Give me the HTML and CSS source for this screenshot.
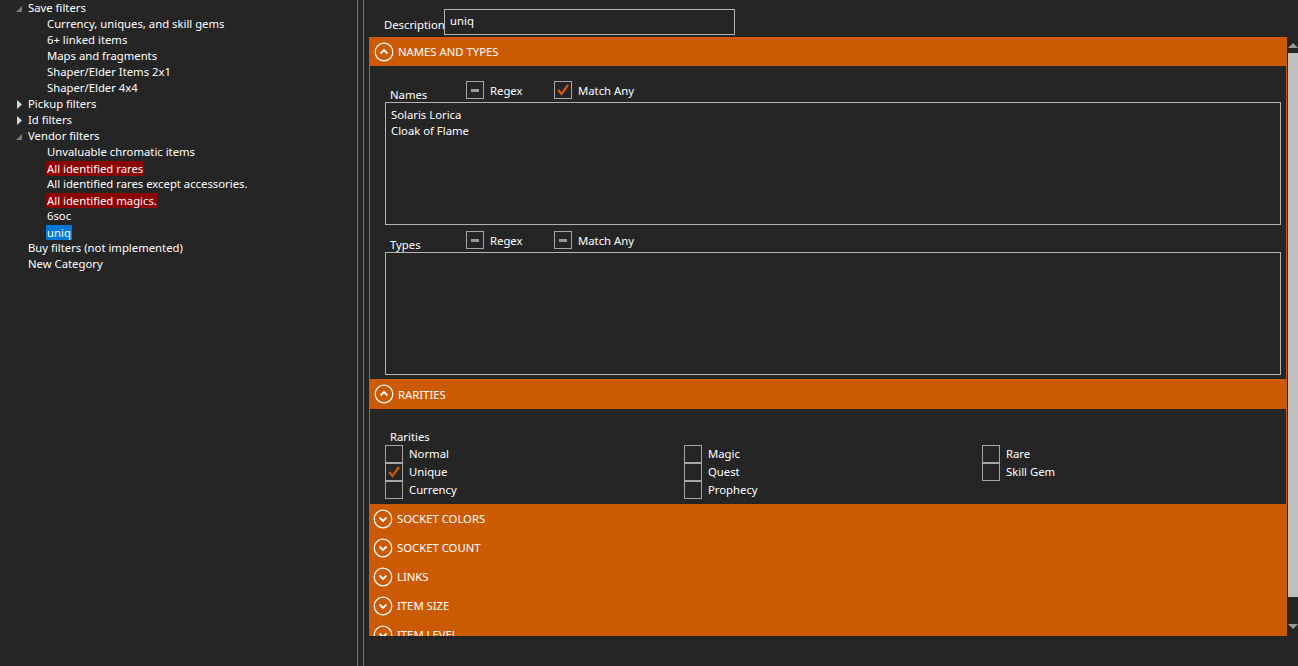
FILE: index.html
```html
<!DOCTYPE html>
<html>
<head>
<meta charset="utf-8">
<link rel="stylesheet" href="styles.css">
</head>
<body>
<div class="app">
  <div class="tree">
    <div class="row l0"><span class="tw open"><svg width="6" height="6" viewBox="0 0 6 6"><polygon points="6,0 6,6 0,6" fill="#7a7a7a"/></svg></span><span class="t">Save filters</span></div>
    <div class="row l1"><span class="t">Currency, uniques, and skill gems</span></div>
    <div class="row l1"><span class="t">6+ linked items</span></div>
    <div class="row l1"><span class="t">Maps and fragments</span></div>
    <div class="row l1"><span class="t">Shaper/Elder Items 2x1</span></div>
    <div class="row l1"><span class="t">Shaper/Elder 4x4</span></div>
    <div class="row l0"><span class="tw"><svg width="5" height="9" viewBox="0 0 5 9"><polygon points="0,0 5,4.5 0,9" fill="#d8d8d8"/></svg></span><span class="t">Pickup filters</span></div>
    <div class="row l0"><span class="tw"><svg width="5" height="9" viewBox="0 0 5 9"><polygon points="0,0 5,4.5 0,9" fill="#d8d8d8"/></svg></span><span class="t">Id filters</span></div>
    <div class="row l0"><span class="tw open"><svg width="6" height="6" viewBox="0 0 6 6"><polygon points="6,0 6,6 0,6" fill="#7a7a7a"/></svg></span><span class="t">Vendor filters</span></div>
    <div class="row l1"><span class="t">Unvaluable chromatic items</span></div>
    <div class="row l1"><span class="t red">All identified rares</span></div>
    <div class="row l1"><span class="t">All identified rares except accessories.</span></div>
    <div class="row l1"><span class="t red">All identified magics.</span></div>
    <div class="row l1"><span class="t">6soc</span></div>
    <div class="row l1"><span class="t sel">uniq</span></div>
    <div class="row l0"><span class="tw"></span><span class="t">Buy filters (not implemented)</span></div>
    <div class="row l0"><span class="tw"></span><span class="t">New Category</span></div>
  </div>
  <div class="gap"></div>
  <div class="main">
    <div class="desc">
      <span class="desc-label">Description</span>
      <div class="textbox">uniq</div>
    </div>
    <div class="scroll">
      <div class="content">
        <div class="exp">
          <div class="hdr"><svg class="ci" width="20" height="20" viewBox="0 0 20 20"><circle cx="10" cy="10" r="8.8" fill="none" stroke="#fff" stroke-width="1.2"/><polyline points="6.5,11.5 10,8 13.5,11.5" fill="none" stroke="#fff" stroke-width="1.8"/></svg><span>NAMES AND TYPES</span></div>
          <div class="body nt">
            <div class="optrow">
              <span class="flabel">Names</span>
              <span class="cb ind"><i></i></span><span class="cbl w-regex">Regex</span>
              <span class="cb chk"><svg width="16" height="16" viewBox="0 0 16 16"><polyline points="3,8 6.5,12 13,3" fill="none" stroke="#cc5a05" stroke-width="2.2"/></svg></span><span class="cbl">Match Any</span>
            </div>
            <div class="area names"><div>Solaris Lorica</div><div>Cloak of Flame</div></div>
            <div class="optrow types">
              <span class="flabel">Types</span>
              <span class="cb ind"><i></i></span><span class="cbl w-regex">Regex</span>
              <span class="cb ind"><i></i></span><span class="cbl">Match Any</span>
            </div>
            <div class="area"></div>
          </div>
        </div>
        <div class="exp">
          <div class="hdr r"><svg class="ci" width="20" height="20" viewBox="0 0 20 20"><circle cx="10" cy="10" r="8.8" fill="none" stroke="#fff" stroke-width="1.2"/><polyline points="6.5,11.5 10,8 13.5,11.5" fill="none" stroke="#fff" stroke-width="1.8"/></svg><span>RARITIES</span></div>
          <div class="body rar">
            <div class="rlabel">Rarities</div>
            <div class="grid">
              <div class="col">
                <div class="ri"><span class="cb"></span><span>Normal</span></div>
                <div class="ri"><span class="cb chk"><svg width="16" height="16" viewBox="0 0 16 16"><polyline points="3,8 6.5,12 13,3" fill="none" stroke="#cc5a05" stroke-width="2.2"/></svg></span><span>Unique</span></div>
                <div class="ri"><span class="cb"></span><span>Currency</span></div>
              </div>
              <div class="col">
                <div class="ri"><span class="cb"></span><span>Magic</span></div>
                <div class="ri"><span class="cb"></span><span>Quest</span></div>
                <div class="ri"><span class="cb"></span><span>Prophecy</span></div>
              </div>
              <div class="col">
                <div class="ri"><span class="cb"></span><span>Rare</span></div>
                <div class="ri"><span class="cb"></span><span>Skill Gem</span></div>
              </div>
            </div>
          </div>
        </div>
        <div class="hdr c"><svg class="ci" width="20" height="20" viewBox="0 0 20 20"><circle cx="10" cy="10" r="8.8" fill="none" stroke="#fff" stroke-width="1.2"/><polyline points="6.5,8.5 10,12 13.5,8.5" fill="none" stroke="#fff" stroke-width="1.8"/></svg><span>SOCKET COLORS</span></div>
        <div class="hdr c"><svg class="ci" width="20" height="20" viewBox="0 0 20 20"><circle cx="10" cy="10" r="8.8" fill="none" stroke="#fff" stroke-width="1.2"/><polyline points="6.5,8.5 10,12 13.5,8.5" fill="none" stroke="#fff" stroke-width="1.8"/></svg><span>SOCKET COUNT</span></div>
        <div class="hdr c"><svg class="ci" width="20" height="20" viewBox="0 0 20 20"><circle cx="10" cy="10" r="8.8" fill="none" stroke="#fff" stroke-width="1.2"/><polyline points="6.5,8.5 10,12 13.5,8.5" fill="none" stroke="#fff" stroke-width="1.8"/></svg><span>LINKS</span></div>
        <div class="hdr c"><svg class="ci" width="20" height="20" viewBox="0 0 20 20"><circle cx="10" cy="10" r="8.8" fill="none" stroke="#fff" stroke-width="1.2"/><polyline points="6.5,8.5 10,12 13.5,8.5" fill="none" stroke="#fff" stroke-width="1.8"/></svg><span>ITEM SIZE</span></div>
        <div class="hdr c"><svg class="ci" width="20" height="20" viewBox="0 0 20 20"><circle cx="10" cy="10" r="8.8" fill="none" stroke="#fff" stroke-width="1.2"/><polyline points="6.5,8.5 10,12 13.5,8.5" fill="none" stroke="#fff" stroke-width="1.8"/></svg><span>ITEM LEVEL</span></div>
      </div>
      <div class="sbar">
        <svg class="arr" width="10" height="6" viewBox="0 0 10 6"><polygon points="0,6 5,1 10,6" fill="#9a9a9a"/></svg>
        <div class="thumb"></div>
        <div class="track"></div>
        <svg class="arr" width="10" height="6" viewBox="0 0 10 6"><polygon points="0,0 5,5 10,0" fill="#9a9a9a"/></svg>
      </div>
    </div>
  </div>
</div>
</body>
</html>
```
FILE: styles.css
```css
html, body {
  margin: 0;
  padding: 0;
}
body {
  width: 1298px;
  height: 666px;
  overflow: hidden;
  background: #252525;
  color: #fff;
  font-family: "Noto Sans", "Open Sans", sans-serif;
  font-size: 11.3px;
}
.app {
  display: flex;
  height: 666px;
}
.tree {
  width: 357px;
  border-right: 1px solid #cc5a05;
  flex: none;
}
.row {
  height: 16px;
  line-height: 16px;
  display: flex;
  align-items: center;
  white-space: nowrap;
}
.row.l0 { padding-left: 16px; }
.row.l1 { padding-left: 46px; }
.tw {
  width: 12px;
  height: 16px;
  display: flex;
  align-items: center;
  justify-content: flex-start;
  padding-left: 1px;
  box-sizing: border-box;
}
.tw.open { padding-left: 0; padding-top: 1px; }
.t {
  padding: 0 1px;
  line-height: 15px;
  position: relative;
  top: -1px;
}
.t.red, .t.sel { top: 0; line-height: 15px; padding-bottom: 0; }
.l0 .t { padding: 0; }
.t.red { background: #8b0000; }
.t.sel { background: #0078d7; }
.gap {
  width: 5px;
  flex: none;
}
.main {
  border-left: 1px solid #cc5a05;
  flex: 1;
  display: flex;
  flex-direction: column;
  height: 666px;
}
.desc {
  height: 37px;
  display: flex;
  align-items: flex-start;
  padding-left: 20px;
  box-sizing: border-box;
  padding-top: 9px;
}
.desc-label {
  width: 60px;
  margin-top: 8px;
  overflow: visible;
  white-space: nowrap;
}
.textbox {
  width: 291px;
  height: 26px;
  box-sizing: border-box;
  border: 1px solid #b4b4b4;
  padding: 3px 5px 0;
  line-height: 16px;
}
.scroll {
  height: 599px;
  display: flex;
  padding-left: 5px;
}
.content {
  width: 918px;
  overflow: hidden;
  flex: none;
}
.hdr {
  height: 29px;
  background: #cc5a05;
  display: flex;
  align-items: center;
  padding-left: 4px;
  white-space: nowrap;
}
.hdr.r { height: 30px; }
.hdr .ci { margin-right: 4px; flex: none; }
.exp {
  border-left: 1px solid #cc5a05;
  border-right: 1px solid #cc5a05;
}
.exp .hdr { margin: 0 -1px; padding-left: 5px; }
.body {
  padding: 0 5px 0 15px;
}
.body.nt {
  height: 313px;
  padding-top: 15px;
  box-sizing: border-box;
}
.optrow {
  display: flex;
  align-items: flex-end;
  height: 18px;
  margin-bottom: 3px;
}
.optrow.types { margin-top: 6px; }
.flabel {
  width: 81px;
  padding-left: 5px;
  box-sizing: border-box;
  margin-bottom: -3px;
}
.cb {
  width: 18px;
  height: 18px;
  box-sizing: border-box;
  border: 1px solid #a6a6a6;
  display: flex;
  align-items: center;
  justify-content: center;
  flex: none;
}
.cb.ind i {
  display: block;
  width: 8px;
  height: 3px;
  background: #9a9a9a;
}
.cbl {
  margin-left: 6px;
  line-height: 18px;
  position: relative;
  top: 1px;
}
.cbl.w-regex { width: 64px; }
.area {
  height: 123px;
  box-sizing: border-box;
  border: 1px solid #b4b4b4;
  padding: 4px 5px 0;
  line-height: 16px;
}
.body.rar {
  height: 95px;
  box-sizing: border-box;
  padding-top: 20px;
}
.rlabel {
  padding-left: 5px;
  line-height: 16px;
  height: 16px;
}
.grid {
  display: grid;
  grid-template-columns: 299px 298px 298px;
}
.ri {
  display: flex;
  align-items: center;
  height: 18px;
  line-height: 18px;
}
.ri .cb { margin-right: 6px; }
.sbar {
  width: 11px;
  display: flex;
  flex-direction: column;
  align-items: flex-end;
  flex: none;
}
.arr { margin-top: 5px; display: block; }
.thumb {
  width: 10px;
  height: 544px;
  background: #c0c0c0;
  margin-top: 5px;
}
.track { flex: 1; }
.sbar .arr:last-child { margin-top: 0; margin-bottom: 6px; }
```
